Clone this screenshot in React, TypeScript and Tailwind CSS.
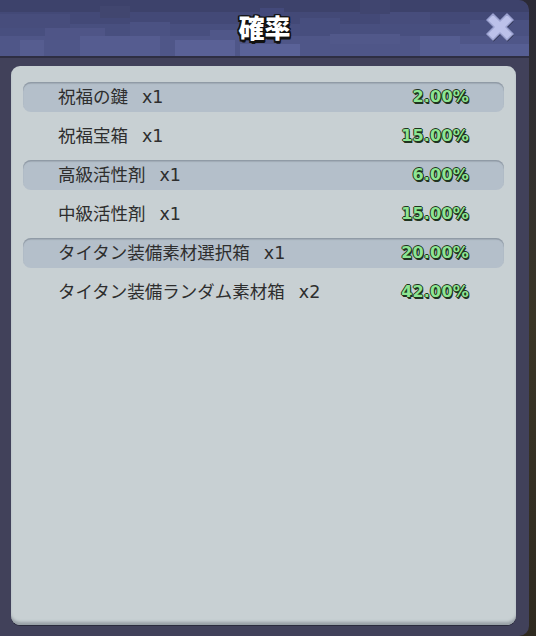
import React from "react";

const ROWS: { name: string; count: string; rate: string }[] = [
  { name: "祝福の鍵", count: "x1", rate: "2.00%" },
  { name: "祝福宝箱", count: "x1", rate: "15.00%" },
  { name: "高級活性剤", count: "x1", rate: "6.00%" },
  { name: "中級活性剤", count: "x1", rate: "15.00%" },
  { name: "タイタン装備素材選択箱", count: "x1", rate: "20.00%" },
  { name: "タイタン装備ランダム素材箱", count: "x2", rate: "42.00%" },
];

// pixel blocks for the header texture: [x, y, w, h, colour]
const BLOCKS: [number, number, number, number, string][] = [
  [0, 12, 536, 44, "#434977"],
  [0, 24, 536, 32, "#484f7f"],
  [0, 36, 536, 20, "#4f5688"],
  [0, 14, 70, 14, "#474d7c"],
  [45, 28, 60, 12, "#4f5587"],
  [80, 36, 80, 20, "#555c90"],
  [130, 22, 40, 14, "#4b5283"],
  [175, 40, 60, 16, "#5a6196"],
  [210, 30, 30, 10, "#505789"],
  [240, 44, 60, 12, "#5a6298"],
  [300, 18, 40, 18, "#474e7e"],
  [330, 34, 70, 10, "#51588a"],
  [380, 12, 50, 12, "#474d7c"],
  [420, 36, 40, 20, "#555d91"],
  [470, 20, 60, 16, "#4a5181"],
  [360, 0, 30, 14, "#40456f"],
  [100, 6, 30, 12, "#41466f"],
  [260, 8, 24, 14, "#43497a"],
  [20, 40, 24, 16, "#565d90"],
  [460, 44, 76, 12, "#565e93"],
];

function Header() {
  return (
    <div className="relative h-[56px] overflow-hidden rounded-tr-[10px] bg-[#3d426b]">
      <svg className="absolute inset-0" width="536" height="56">
        {BLOCKS.map(([x, y, w, h, c], i) => (
          <rect key={i} x={x} y={y} width={w} height={h} fill={c} />
        ))}
      </svg>
      <div className="relative flex h-full items-center justify-center pb-[3px]">
        <span
          className="text-[26px] font-black leading-none text-white"
          style={{
            fontFamily: '"Noto Sans CJK JP", sans-serif',
            textShadow:
              "-1.5px 0 #111, 1.5px 0 #111, 0 -1.5px #111, 0 1.5px #111, -1.5px -1.5px #111, 1.5px 1.5px #111, -1.5px 1.5px #111, 1.5px -1.5px #111, 1px 3px #111",
          }}
        >
          確率
        </span>
      </div>
      <svg
        className="absolute right-[12px] top-[10px]"
        width="34"
        height="34"
        viewBox="0 0 34 34"
      >
        <path
          d="M4 10 L10 4 L17 11 L24 4 L30 10 L23 17 L30 24 L24 30 L17 23 L10 30 L4 24 L11 17 Z"
          fill="#262a44"
          transform="translate(0.5 1.5)"
        />
        <path
          d="M4 10 L10 4 L17 11 L24 4 L30 10 L23 17 L30 24 L24 30 L17 23 L10 30 L4 24 L11 17 Z"
          fill="#bcc1ea"
          stroke="#9ba1d0"
          strokeWidth="1.5"
          strokeLinejoin="round"
        />
      </svg>
    </div>
  );
}

export default function App() {
  return (
    <div className="flex h-[636px] w-[536px] overflow-hidden bg-gradient-to-b from-[#2b2a36] via-[#3a3526] to-[#2f2a20]">
      <div className="flex h-[636px] w-[529px] flex-col overflow-hidden rounded-tr-[10px] rounded-br-[10px] bg-[#41415a]">
        <Header />
        <div className="h-[2px] bg-[#2e2e42]" />
        <div className="flex-1 px-[11px] pt-[8px] pb-[11px] pr-[13px]">
          <div className="flex h-full flex-col rounded-[9px] bg-[#c8d0d3] px-[12px] pt-[16px] shadow-[inset_0_-4px_3px_-1px_#98a0a6,0_1px_0_#2a2a3c]">
            {ROWS.map((r, i) => (
              <div
                key={i}
                className={`mb-[9px] flex h-[30px] items-center justify-between rounded-[8px] pl-[35px] pr-[35px] ${
                  i % 2 === 0
                    ? "bg-[#b4bfca] shadow-[inset_0_1.5px_1px_#8f99a4]"
                    : ""
                }`}
              >
                <span
                  className="text-[17.5px] text-[#2e2e2e]"
                  style={{ fontFamily: '"Noto Sans CJK JP", sans-serif' }}
                >
                  {r.name}
                  <span
                    className="ml-[14px]"
                    style={{ fontFamily: '"DejaVu Sans", sans-serif' }}
                  >
                    {r.count}
                  </span>
                </span>
                <span
                  className="text-[16px] font-black tracking-[0.2px] text-[#8ee592]"
                  style={{
                    fontFamily: '"DejaVu Sans", sans-serif',
                    textShadow:
                      "-1px 0 #1f3320, 1px 0 #1f3320, 0 -1px #1f3320, 0 1px #1f3320, 1px 2px #1f3320",
                  }}
                >
                  {r.rate}
                </span>
              </div>
            ))}
          </div>
        </div>
      </div>
    </div>
  );
}
